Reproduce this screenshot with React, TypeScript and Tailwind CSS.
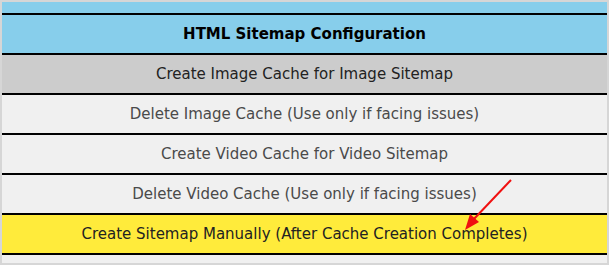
const rows = [
  { label: "Create Image Cache for Image Sitemap", bg: "bg-[#cccccc]", text: "text-[#222222]" },
  { label: "Delete Image Cache (Use only if facing issues)", bg: "bg-[#f0f0f0]", text: "text-[#4a4a4a]" },
  { label: "Create Video Cache for Video Sitemap", bg: "bg-[#f0f0f0]", text: "text-[#4a4a4a]" },
  { label: "Delete Video Cache (Use only if facing issues)", bg: "bg-[#f0f0f0]", text: "text-[#4a4a4a]" },
  { label: "Create Sitemap Manually (After Cache Creation Completes)", bg: "bg-[#ffeb3b]", text: "text-[#222222]" },
];

const App = () => {
  return (
    <div className="w-[609px] h-[265px] bg-[#d6d6d6] p-[2px] overflow-hidden">
      <div
        className="relative h-full bg-[#f0f0f0] overflow-hidden text-[15px]"
        style={{ fontFamily: '"DejaVu Sans", Verdana, sans-serif' }}
      >
        {/* bottom of the section above, scrolled out of view */}
        <div className="h-[11px] bg-[#87ceeb]" />

        <div className="h-[40px] border-t-2 border-black bg-[#87ceeb] flex items-center justify-center font-bold text-black">
          HTML Sitemap Configuration
        </div>

        {rows.map((row) => (
          <button
            key={row.label}
            className={`w-full h-[40px] border-t-2 border-black flex items-center justify-center ${row.bg} ${row.text}`}
          >
            {row.label}
          </button>
        ))}
        <div className="border-t-2 border-black" />

        {/* red annotation arrow */}
        <svg className="absolute left-0 top-0 pointer-events-none" width="605" height="261">
          <line x1="509" y1="178" x2="471" y2="218" stroke="#f01010" strokeWidth="2" />
          <polygon points="463,228 468,212 477,220" fill="#f01010" />
        </svg>
      </div>
    </div>
  );
};

export default App;
